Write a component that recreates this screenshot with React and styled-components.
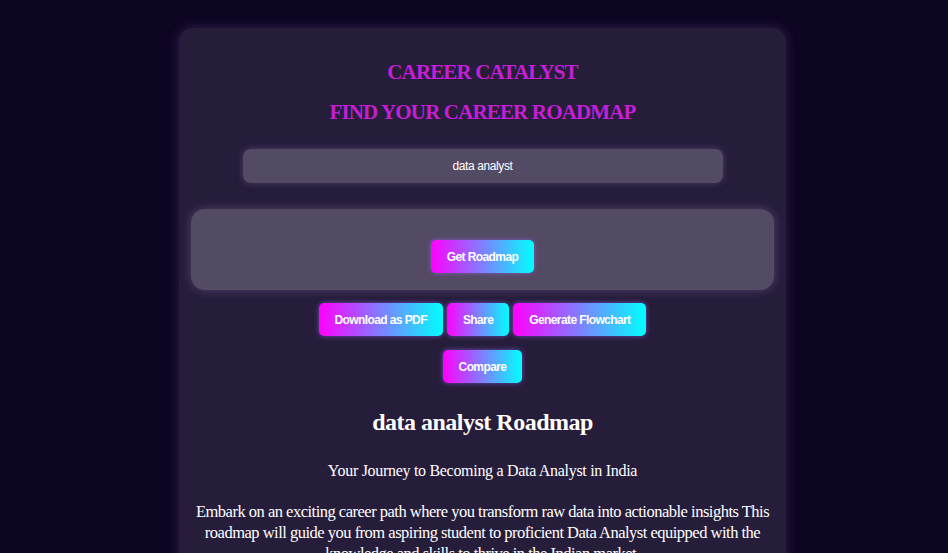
import styled, { createGlobalStyle } from "styled-components";

const GlobalStyle = createGlobalStyle`
  html, body {
    margin: 0;
    padding: 0;
    background: #0e0522;
    font-family: "Liberation Serif", "Times New Roman", serif;
  }
`;

const Page = styled.div`
  display: flex;
  justify-content: center;
  padding: 28px 0 0 17px;
  height: 100vh;
  box-sizing: border-box;
  overflow: hidden;
`;

const Card = styled.main`
  width: 607px;
  height: max-content;
  box-sizing: border-box;
  padding: 24px 12px 40px;
  background: #261d3b;
  border-radius: 14px;
  box-shadow: 0 0 12px rgba(90, 70, 130, 0.45);
  display: flex;
  flex-direction: column;
  align-items: center;
`;

const Title = styled.h1`
  margin: 0;
  color: #c41fd4;
  font-family: "Liberation Serif", "Times New Roman", serif;
  font-weight: bold;
  font-size: 21px;
  letter-spacing: -0.85px;
  line-height: 40px;
  text-align: center;
`;

const SearchInput = styled.input`
  margin-top: 17px;
  width: 480px;
  height: 34px;
  box-sizing: border-box;
  border: none;
  border-radius: 8px;
  background: #534a63;
  color: #ffffff;
  text-align: center;
  font-family: "Liberation Sans", Arial, sans-serif;
  font-size: 12px;
  letter-spacing: -0.4px;
  box-shadow: 0 0 6px rgba(120, 100, 150, 0.5);
  outline: none;
`;

const Panel = styled.section`
  margin-top: 26px;
  width: 100%;
  height: 81px;
  box-sizing: border-box;
  border-radius: 14px;
  background: #534a63;
  box-shadow: 0 0 10px rgba(120, 100, 150, 0.55);
  display: flex;
  align-items: center;
  justify-content: center;
  padding-top: 14px;
`;

const GradientButton = styled.button`
  height: 33px;
  padding: 0 16px;
  border: none;
  border-radius: 5px;
  background: linear-gradient(90deg, #ff00ff, #00ffff);
  color: #ffffff;
  font-family: "Liberation Sans", Arial, sans-serif;
  font-weight: bold;
  font-size: 12px;
  letter-spacing: -0.6px;
  box-shadow: 0 0 5px rgba(160, 110, 255, 0.6);
  cursor: pointer;
`;

const ButtonRow = styled.div`
  display: flex;
  justify-content: center;
  gap: 4px;
  margin-top: ${(p) => p.$top || 0}px;
`;

const RoadmapTitle = styled.h2`
  margin: 22px 0 0;
  color: #ffffff;
  font-size: 24px;
  letter-spacing: -0.5px;
  font-weight: bold;
  line-height: 34px;
  text-align: center;
`;

const Subtitle = styled.p`
  margin: 22px 0 0;
  color: #ffffff;
  font-size: 16px;
  letter-spacing: -0.3px;
  line-height: 20px;
  text-align: center;
`;

const Intro = styled.p`
  margin: 20px 0 0;
  padding: 0 4px;
  color: #ffffff;
  font-size: 16.5px;
  letter-spacing: -0.5px;
  line-height: 21px;
  text-align: center;
`;

export default function App() {
  return (
    <>
      <GlobalStyle />
      <Page>
        <Card>
          <Title>CAREER CATALYST</Title>
          <Title>FIND YOUR CAREER ROADMAP</Title>
          <SearchInput defaultValue="data analyst" />
          <Panel>
            <GradientButton>Get Roadmap</GradientButton>
          </Panel>
          <ButtonRow $top={13}>
            <GradientButton>Download as PDF</GradientButton>
            <GradientButton>Share</GradientButton>
            <GradientButton>Generate Flowchart</GradientButton>
          </ButtonRow>
          <ButtonRow $top={14}>
            <GradientButton>Compare</GradientButton>
          </ButtonRow>
          <RoadmapTitle>data analyst Roadmap</RoadmapTitle>
          <Subtitle>Your Journey to Becoming a Data Analyst in India</Subtitle>
          <Intro>
            Embark on an exciting career path where you transform raw data into
            actionable insights This roadmap will guide you from aspiring
            student to proficient Data Analyst equipped with the knowledge and
            skills to thrive in the Indian market.
          </Intro>
        </Card>
      </Page>
    </>
  );
}
